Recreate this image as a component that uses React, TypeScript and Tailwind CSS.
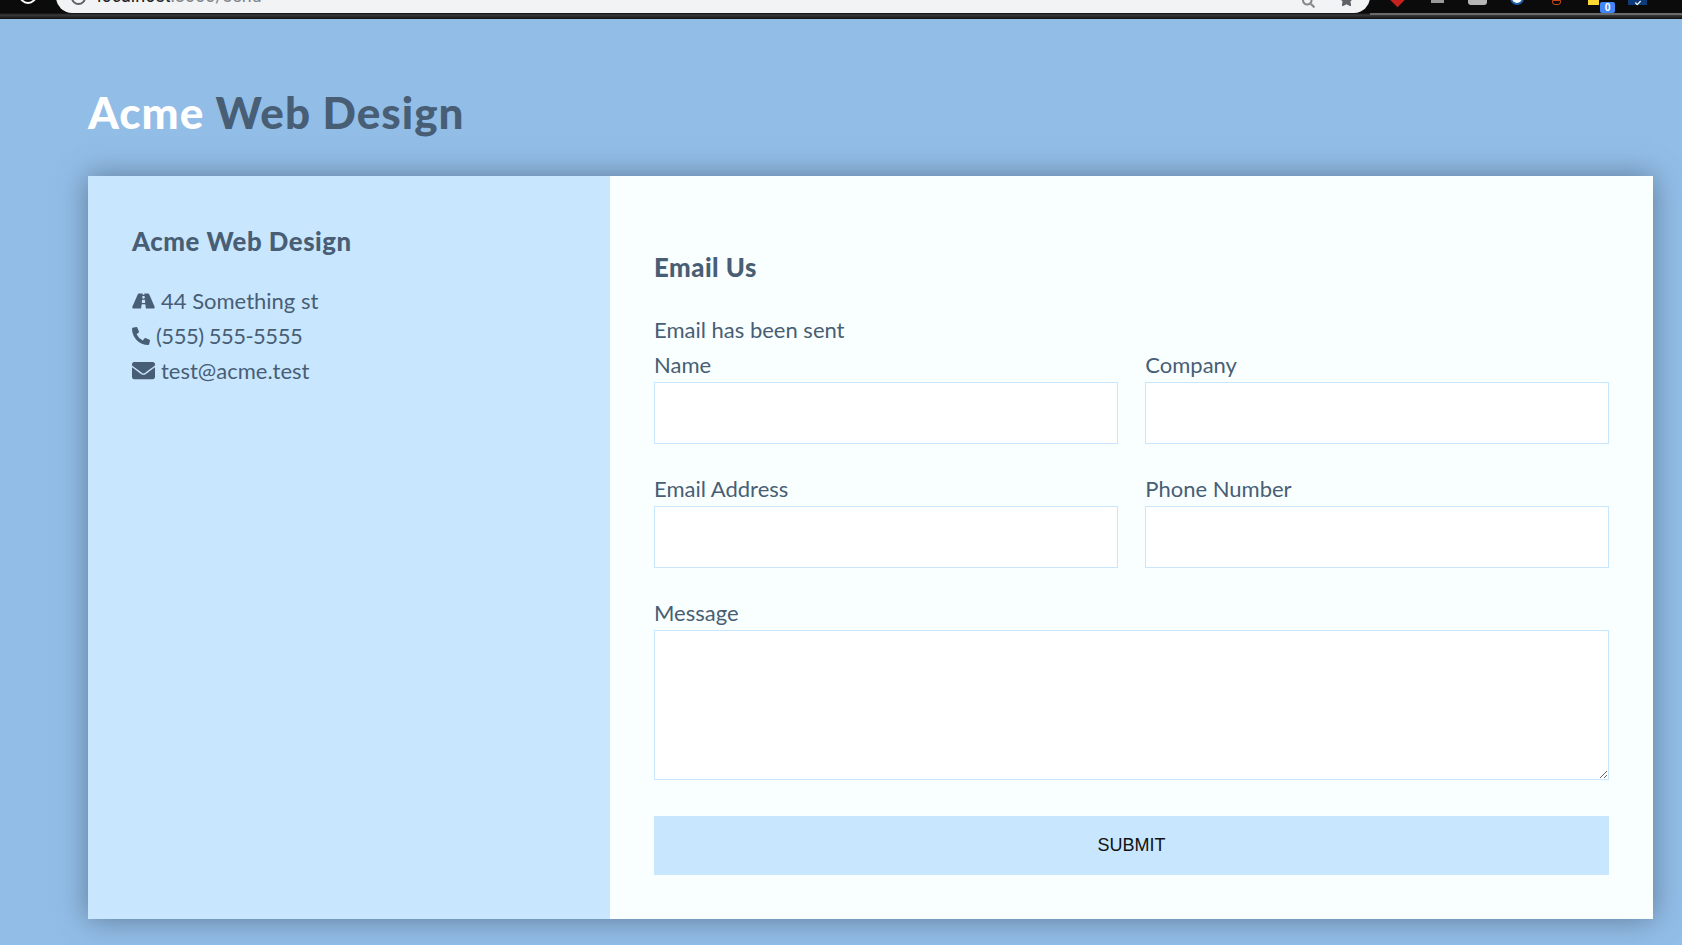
import React from 'react';
import { FaRoad, FaPhoneAlt, FaEnvelope, FaStar, FaSearch, FaCheck } from 'react-icons/fa';

function BrowserStrip() {
  return (
    <div className="relative h-[19px] overflow-hidden bg-[linear-gradient(#0b0b0b_0,#0b0b0b_13px,#3a3a3a_15px,#111_19px)]">
      {/* the top of the browser window, cut off by the screenshot */}
      <div className="absolute left-[19px] top-[-14px] size-[18px] rounded-full border-2 border-white" />
      <div className="absolute left-[56px] top-[-20px] flex h-[33px] w-[1314px] items-end rounded-b-[16px] bg-[#f1f3f4]">
        <div className="mb-[8px] ml-[15px] size-[15px] rounded-full border-2 border-[#5f6368]" />
        <span className="mb-[7px] ml-[11px] font-['Roboto',sans-serif] text-[18px] leading-[20px] text-[#202124]">
          localhost<span className="text-[#80868b]">:3000/send</span>
        </span>
        <FaSearch className="absolute left-[1246px] top-[15px] size-[13px] text-[#888]" />
        <FaStar className="absolute left-[1283px] top-[12px] size-[15px] text-[#5f6368]" />
      </div>
      <div className="absolute left-[1370px] top-[13px] h-[2px] w-[312px] bg-[#6a6a6a]" />
      <div className="absolute left-[1392px] top-[-6px] size-[11px] rotate-45 bg-[#c5221f]" />
      <div className="absolute left-[1431px] top-0 h-[3px] w-[13px] bg-[#999]" />
      <div className="absolute left-[1468px] top-[-6px] h-[11px] w-[19px] rounded-[3px] bg-[#b5b5b5]" />
      <div className="absolute left-[1510px] top-[-9px] size-[14px] rounded-full border-2 border-[#1a5fa8] bg-white" />
      <div className="absolute left-[1552px] top-0 h-[5px] w-[9px] rounded-b-[3px] border border-[#c8481c]" />
      <div className="absolute left-[1588px] top-0 h-[5px] w-[11px] bg-[#fdd835]" />
      <div className="absolute left-[1600px] top-[2px] flex h-[11px] w-[15px] items-center justify-center rounded-[2px] bg-[#4285f4] font-['Roboto',sans-serif] text-[10px] font-bold leading-none text-white">
        0
      </div>
      <div className="absolute left-[1628px] top-0 flex h-[5px] w-[19px] items-start justify-center bg-[#0d3c78]">
        <FaCheck className="size-[6px] text-white" />
      </div>
    </div>
  );
}

function Field({ label, wide, area }: { label: string; wide?: boolean; area?: boolean }) {
  return (
    <div className={wide ? 'col-span-2' : ''}>
      <label className="block h-[35px] leading-[35px]">{label}</label>
      {area ? (
        <textarea className="block h-[150px] w-full border border-[#c9e6ff] bg-white outline-none" />
      ) : (
        <input className="block h-[62px] w-full border border-[#c9e6ff] bg-white outline-none" />
      )}
    </div>
  );
}

export default function App() {
  return (
    <div className="min-h-[945px] overflow-hidden bg-[#92bde7] font-['Lato',sans-serif] text-[22px] leading-[35px] text-[#485e74]">
      <BrowserStrip />

      <h1 className="ml-[88px] mt-[64px] h-[93px] text-[44px] font-black leading-[58px] tracking-[1px]">
        <span className="text-white">Acme</span> Web Design
      </h1>

      <div className="mx-[29px] ml-[88px] flex h-[743px] shadow-[0_0_27px_0_rgba(72,94,116,0.7)]">
        <div className="w-[522px] bg-[#c9e6ff] px-[44px] pt-[48px]">
          <h3 className="mb-[24px] text-[25.74px] font-black leading-[35px] tracking-[0.55px]">Acme Web Design</h3>
          <ul>
            <li className="flex h-[35px] items-center gap-[6px]">
              <FaRoad className="h-[20px] w-[23px]" />
              <span>44 Something st</span>
            </li>
            <li className="flex h-[35px] items-center gap-[6px]">
              <FaPhoneAlt className="size-[18px]" />
              <span className="tracking-[-0.5px]">(555) 555-5555</span>
            </li>
            <li className="flex h-[35px] items-center gap-[6px]">
              <FaEnvelope className="size-[23px]" />
              <span>test@acme.test</span>
            </li>
          </ul>
        </div>

        <div className="flex-1 bg-[#f9feff] px-[44px] pt-[74px]">
          <h3 className="mb-[27px] h-[35px] text-[25.74px] font-black leading-[35px] tracking-[0.5px]">Email Us</h3>
          <p className="h-[35px]">Email has been sent</p>
          <form className="grid grid-cols-2 gap-x-[27.5px] gap-y-[27px]">
            <Field label="Name" />
            <Field label="Company" />
            <Field label="Email Address" />
            <Field label="Phone Number" />
            <Field label="Message" wide area />
            <button
              type="button"
              className="col-span-2 mt-[9px] h-[59px] bg-[#c9e6ff] font-['Liberation_Sans',sans-serif] text-[18px] uppercase text-[#111]"
            >
              Submit
            </button>
          </form>
        </div>
      </div>
    </div>
  );
}
